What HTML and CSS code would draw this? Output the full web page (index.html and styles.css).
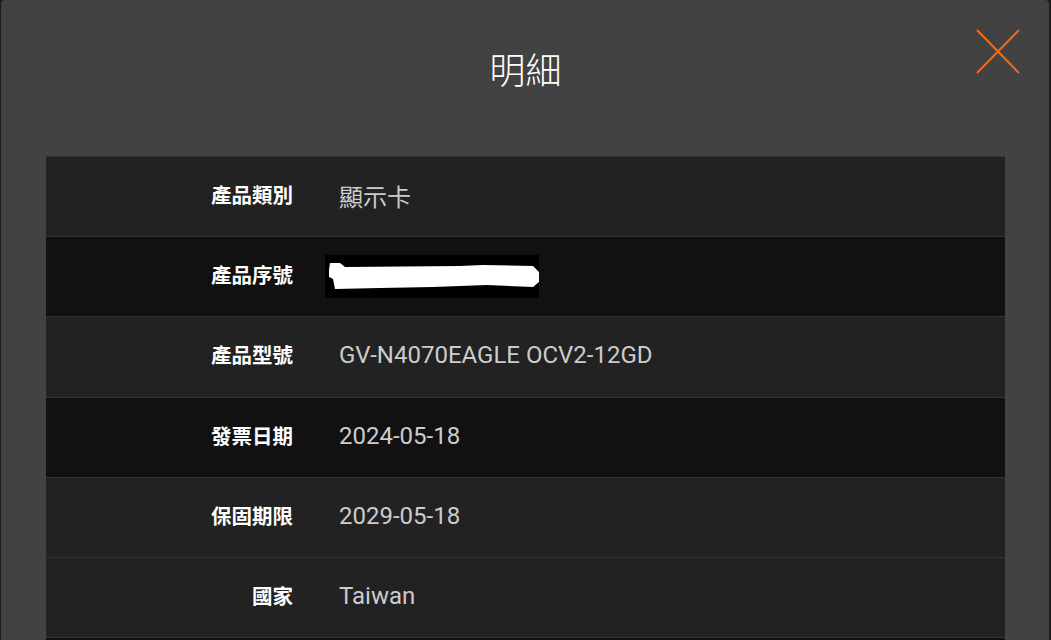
FILE: index.html
```html
<!DOCTYPE html>
<html lang="zh-Hant">
<head>
  <meta charset="UTF-8">
  <meta name="viewport" content="width=device-width, initial-scale=1.0">
  <title>明細</title>
  <link rel="stylesheet" href="styles.css">
</head>
<body>
  <div class="modal">
    <button class="close" aria-label="關閉">
      <svg width="44" height="45" viewBox="0 0 44 45">
        <line x1="1" y1="1" x2="43" y2="44" />
        <line x1="43" y1="1" x2="1" y2="44" />
      </svg>
    </button>
    <h1 class="title">明細</h1>

    <div class="detail">
      <div class="row">
        <div class="label">產品類別</div>
        <div class="value">顯示卡</div>
      </div>
      <div class="row dark">
        <div class="label">產品序號</div>
        <div class="value">
          <span class="redact">
            <svg width="214" height="43" viewBox="0 0 214 43">
              <path d="M5 8 L15 8 L20 12 L135 11 L158 10 L208 11 L214 17 L214 27 L208 32 L162 30 L108 32 L55 33 L10 34 L8 24 L4 22 L4 15 Z" />
            </svg>
          </span>
        </div>
      </div>
      <div class="row">
        <div class="label">產品型號</div>
        <div class="value">GV-N4070EAGLE OCV2-12GD</div>
      </div>
      <div class="row dark">
        <div class="label">發票日期</div>
        <div class="value">2024-05-18</div>
      </div>
      <div class="row">
        <div class="label">保固期限</div>
        <div class="value">2029-05-18</div>
      </div>
      <div class="row">
        <div class="label">國家</div>
        <div class="value">Taiwan</div>
      </div>
      <div class="row dark">
        <div class="label"></div>
        <div class="value"></div>
      </div>
    </div>
  </div>
</body>
</html>
```

FILE: styles.css
```css
* { box-sizing: border-box; }
html, body { height: 100%; }
body {
  margin: 0;
  background: #1c1c1c;
  font-family: Roboto, "Noto Sans CJK TC", sans-serif;
  overflow: hidden;
}
.modal {
  position: relative;
  margin-left: 1px;
  width: 1048px;
  min-height: 700px;
  background: #424242;
  border-radius: 4px;
  padding: 44px 44px 40px 45px;
}
.title {
  margin: 0 0 64px;
  text-align: center;
  font-family: "Noto Sans CJK TC", sans-serif;
  font-size: 36px;
  font-weight: 300;
  line-height: 48px;
  color: #fff;
}
.close {
  position: absolute;
  top: 29px;
  right: 29px;
  padding: 0;
  border: none;
  background: none;
  cursor: pointer;
}
.close svg { display: block; }
.close line {
  stroke: #f26a1b;
  stroke-width: 2;
}
.detail {
  border-top: 1px solid #333;
}
.row {
  display: flex;
  align-items: center;
  height: 80.2px;
  border-bottom: 1px solid #333;
  background: #222;
}
.row.dark { background: #111; }
.label {
  width: 247px;
  padding-bottom: 5px;
  text-align: right;
  font-family: "Noto Sans CJK TC", sans-serif;
  font-size: 20.5px;
  font-weight: bold;
  color: #fff;
}
.value {
  margin-left: 46px;
  padding-bottom: 3px;
  font-size: 24px;
  color: #ccc;
}
.redact {
  display: block;
  margin: 3px 0 0 -14px;
  width: 214px;
  height: 43px;
  background: #000;
}
.redact svg { display: block; }
.redact path { fill: #fff; }
```
